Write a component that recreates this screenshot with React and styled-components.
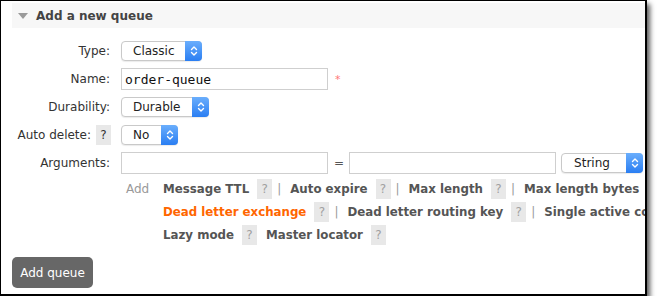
import React from 'react';
import styled, { createGlobalStyle } from 'styled-components';

const GlobalStyle = createGlobalStyle`
  body {
    margin: 0;
    background: #fff;
    font-family: "DejaVu Sans", Verdana, sans-serif;
  }
`;

const Frame = styled.div`
  width: 647px;
  height: 296px;
  box-sizing: border-box;
  border: 1px solid #000;
  border-right-width: 2px;
  border-bottom-width: 2px;
  background: #fff;
  box-shadow: 3px 4px 5px rgba(0, 0, 0, 0.65);
  overflow: hidden;
`;

const Header = styled.div`
  margin: 2px 0 0 11px;
  height: 25px;
  background: #f7f7f7;
  display: flex;
  align-items: center;
  padding-left: 6px;
  gap: 8px;
  font-size: 12px;
  font-weight: bold;
  color: #444;
`;

const Triangle = styled.span`
  width: 0;
  height: 0;
  border-left: 5.5px solid transparent;
  border-right: 5.5px solid transparent;
  border-top: 6px solid #9a9a9a;
`;

const Form = styled.div`
  padding: 9px 0 0 11px;
`;

const Row = styled.div`
  display: grid;
  grid-template-columns: 98px 1fr;
  column-gap: 11px;
  height: ${(p) => p.$height || 28}px;
  align-items: ${(p) => (p.$top ? 'start' : 'center')};
`;

const Label = styled.div`
  display: flex;
  align-items: center;
  justify-content: flex-end;
  font-size: 12px;
  color: #333;
  white-space: nowrap;
`;

const Controls = styled.div`
  display: flex;
  align-items: center;
  white-space: nowrap;
`;

const Help = styled.span`
  display: inline-flex;
  align-items: center;
  justify-content: center;
  flex-shrink: 0;
  width: 15px;
  height: 20px;
  background: #e8e8e8;
  font-size: 12px;
  font-weight: normal;
  color: ${(p) => (p.$dark ? '#333' : '#a0a0a0')};
  margin-left: ${(p) => p.$gap || 0}px;
  margin-right: ${(p) => p.$right || 0}px;
`;

const SelectBox = styled.div`
  position: relative;
  box-sizing: border-box;
  width: ${(p) => p.$width}px;
  height: 20px;
  border: 1px solid #c9c9c9;
  border-radius: 4px;
  background: #fff;
  box-shadow: 0 1px 1px rgba(0, 0, 0, 0.08);
  display: flex;
  align-items: center;
  padding-left: ${(p) => p.$pad || 11}px;
  font-size: 12px;
  color: #222;
  flex-shrink: 0;
`;

const Arrows = styled.span`
  position: absolute;
  top: -1px;
  right: -1px;
  bottom: -1px;
  width: 17px;
  border-radius: 0 4px 4px 0;
  background: linear-gradient(#6aaefc, #2a7ef2);
  display: flex;
  align-items: center;
  justify-content: center;
`;

const TextInput = styled.div`
  box-sizing: border-box;
  width: ${(p) => p.$width}px;
  height: 22px;
  border: 1px solid #cfcfcf;
  background: #fff;
  display: flex;
  align-items: center;
  padding-left: 3px;
  font-family: "DejaVu Sans Mono", monospace;
  font-size: 13px;
  color: #111;
  flex-shrink: 0;
`;

const Required = styled.span`
  margin-left: 7px;
  font-size: 11px;
  color: #f77;
`;

const Equals = styled.span`
  margin: 0 5px 0 6px;
  font-size: 12px;
  color: #555;
`;

const ArgsArea = styled.div`
  display: flex;
  align-items: flex-start;
`;

const AddText = styled.div`
  width: 37px;
  padding-left: 5px;
  height: 23px;
  display: flex;
  align-items: center;
  font-size: 12px;
  color: #999;
  flex-shrink: 0;
`;

const LinkRows = styled.div`
  display: flex;
  flex-direction: column;
`;

const LinkRow = styled.div`
  display: flex;
  align-items: center;
  height: 23px;
  white-space: nowrap;
`;

const ArgLink = styled.span`
  font-size: 11.8px;
  font-weight: bold;
  color: ${(p) => (p.$active ? '#ff6600' : '#555')};
  margin-left: ${(p) => p.$gap || 0}px;
  flex-shrink: 0;
`;

const Sep = styled.span`
  margin-left: 5px;
  font-size: 12px;
  color: #999;
`;

const Button = styled.div`
  margin: 11px 0 0 11px;
  width: 81px;
  height: 31px;
  border-radius: 5px;
  background: #676767;
  color: #fff;
  font-size: 12px;
  display: flex;
  align-items: center;
  justify-content: center;
`;

function Select({ value, width, pad }) {
  return (
    <SelectBox $width={width} $pad={pad}>
      {value}
      <Arrows>
        <svg width="8" height="12" viewBox="0 0 8 12" fill="none" stroke="#fff" strokeWidth="1.4" strokeLinecap="round" strokeLinejoin="round">
          <path d="M1.5 4.5 L4 2 L6.5 4.5" />
          <path d="M1.5 7.5 L4 10 L6.5 7.5" />
        </svg>
      </Arrows>
    </SelectBox>
  );
}

const linkRows = [
  [
    { name: 'Message TTL' },
    { name: 'Auto expire', sep: true },
    { name: 'Max length', sep: true },
    { name: 'Max length bytes', sep: true, noHelp: true },
  ],
  [
    { name: 'Dead letter exchange', active: true },
    { name: 'Dead letter routing key', sep: true },
    { name: 'Single active consumer', sep: true },
  ],
  [{ name: 'Lazy mode' }, { name: 'Master locator', gap: 9 }],
];

export default function App() {
  return (
    <>
      <GlobalStyle />
      <Frame>
        <Header>
          <Triangle />
          Add a new queue
        </Header>
        <Form>
          <Row>
            <Label>Type:</Label>
            <Controls>
              <Select value="Classic" width={81} />
            </Controls>
          </Row>
          <Row>
            <Label>Name:</Label>
            <Controls>
              <TextInput $width={207}>order-queue</TextInput>
              <Required>*</Required>
            </Controls>
          </Row>
          <Row>
            <Label>Durability:</Label>
            <Controls>
              <Select value="Durable" width={88} />
            </Controls>
          </Row>
          <Row>
            <Label>
              Auto delete:
              <Help $dark $gap={5} $right={-1}>?</Help>
            </Label>
            <Controls>
              <Select value="No" width={57} />
            </Controls>
          </Row>
          <Row>
            <Label>Arguments:</Label>
            <Controls>
              <TextInput $width={207} />
              <Equals>=</Equals>
              <TextInput $width={207} />
              <span style={{ width: 5 }} />
              <Select value="String" width={82} pad={12} />
            </Controls>
          </Row>
          <Row $height={69} $top>
            <div />
            <ArgsArea>
              <AddText>Add</AddText>
              <LinkRows>
                {linkRows.map((row, i) => (
                  <LinkRow key={i}>
                    {row.map((item, j) => (
                      <React.Fragment key={item.name}>
                        {item.sep && <Sep>|</Sep>}
                        <ArgLink $active={item.active} $gap={j === 0 ? 0 : item.gap || 9}>
                          {item.name}
                        </ArgLink>
                        {!item.noHelp && <Help $gap={8}>?</Help>}
                      </React.Fragment>
                    ))}
                  </LinkRow>
                ))}
              </LinkRows>
            </ArgsArea>
          </Row>
        </Form>
        <Button>Add queue</Button>
      </Frame>
    </>
  );
}
